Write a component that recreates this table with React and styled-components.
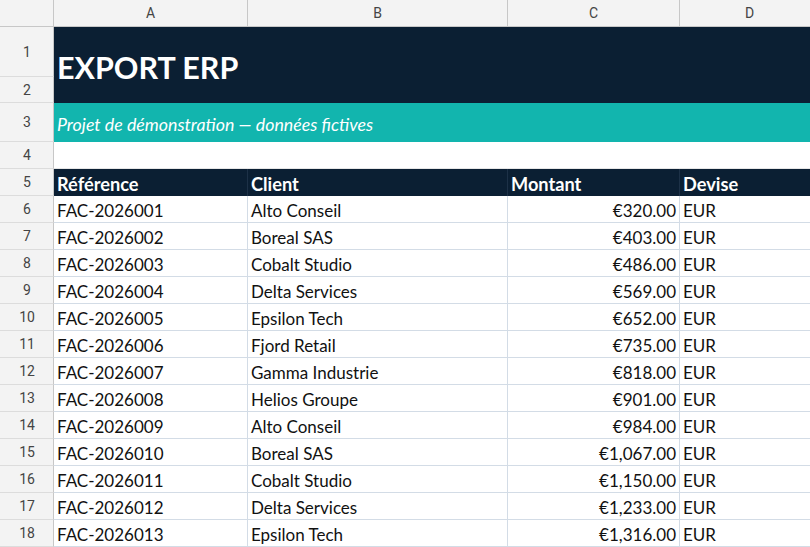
import React from "react";
import styled, { createGlobalStyle } from "styled-components";

const GlobalStyle = createGlobalStyle`
  html, body {
    margin: 0;
    padding: 0;
    background: #ffffff;
    overflow: hidden;
  }
  * { box-sizing: border-box; }
`;

const NAVY = "#0b1f33";
const TEAL = "#12b5ae";
const GRID = "#d3dce6";
const HEAD_LINE = "#c7c7c7";

const Sheet = styled.div`
  display: grid;
  grid-template-columns: 54px 194px 260px 172px 140px;
  grid-template-rows: 27px 50px 26px 39px 27px 27px repeat(13, 27px);
  width: 820px;
  font-family: Lato, "Noto Sans", sans-serif;
`;

const Corner = styled.div`
  background: #f3f3f3;
  border-right: 1px solid ${HEAD_LINE};
  border-bottom: 1px solid ${HEAD_LINE};
`;

const ColHead = styled.div`
  background: #f3f3f3;
  border-right: 1px solid ${HEAD_LINE};
  border-bottom: 1px solid ${HEAD_LINE};
  display: flex;
  align-items: center;
  justify-content: center;
  font-family: Roboto, "Liberation Sans", sans-serif;
  font-size: 14px;
  color: #444;
`;

const RowHead = styled(ColHead)`
  border-bottom: 1px solid #dcdcdc;
  padding-left: 1px;
`;

const Banner = styled.div`
  grid-column: 2 / 6;
  grid-row: ${p => p.$rows};
  background: ${p => p.$bg};
  color: #fff;
  display: flex;
  align-items: center;
  padding-left: 3px;
`;

const Title = styled.span`
  font-weight: 700;
  font-size: 30.5px;
  margin-top: 3px;
`;

const Subtitle = styled.span`
  font-style: italic;
  font-size: 17.8px;
  margin-top: 2px;
`;

const Empty = styled.div`
  grid-column: 2 / 6;
  background: #fff;
  border-bottom: 1px solid #e6e6e6;
`;

const HeadCell = styled.div`
  background: ${NAVY};
  color: #fff;
  font-weight: 700;
  font-size: 18.2px;
  display: flex;
  align-items: center;
  padding: 3px 3px 0;
  border-right: 1px solid #1d3147;
`;

const Cell = styled.div`
  background: #fff;
  color: #111;
  font-size: 17px;
  display: flex;
  align-items: center;
  justify-content: ${p => (p.$right ? "flex-end" : "flex-start")};
  padding: 2px 3px 0 3px;
  border-right: 1px solid ${GRID};
  border-bottom: 1px solid ${GRID};
  white-space: nowrap;
  overflow: hidden;
`;

const clients = [
  "Alto Conseil",
  "Boreal SAS",
  "Cobalt Studio",
  "Delta Services",
  "Epsilon Tech",
  "Fjord Retail",
  "Gamma Industrie",
  "Helios Groupe",
];

const formatAmount = n =>
  "€" + n.toLocaleString("en-US", { minimumFractionDigits: 2, maximumFractionDigits: 2 });

const invoices = Array.from({ length: 13 }, (_, i) => ({
  ref: `FAC-2026${String(i + 1).padStart(3, "0")}`,
  client: clients[i % clients.length],
  amount: formatAmount(320 + i * 83),
  currency: "EUR",
}));

export default function App() {
  return (
    <>
      <GlobalStyle />
      <Sheet>
        <Corner />
        {["A", "B", "C", "D"].map(l => (
          <ColHead key={l}>{l}</ColHead>
        ))}

        <RowHead style={{ gridRow: 2 }}>1</RowHead>
        <Banner $rows="2 / 4" $bg={NAVY}>
          <Title>EXPORT ERP</Title>
        </Banner>
        <RowHead style={{ gridRow: 3 }}>2</RowHead>

        <RowHead>3</RowHead>
        <Banner $rows="4" $bg={TEAL}>
          <Subtitle>Projet de démonstration — données fictives</Subtitle>
        </Banner>

        <RowHead>4</RowHead>
        <Empty />

        <RowHead>5</RowHead>
        <HeadCell>Référence</HeadCell>
        <HeadCell>Client</HeadCell>
        <HeadCell>Montant</HeadCell>
        <HeadCell>Devise</HeadCell>

        {invoices.map((inv, i) => (
          <React.Fragment key={inv.ref}>
            <RowHead>{i + 6}</RowHead>
            <Cell>{inv.ref}</Cell>
            <Cell>{inv.client}</Cell>
            <Cell $right>{inv.amount}</Cell>
            <Cell>{inv.currency}</Cell>
          </React.Fragment>
        ))}
      </Sheet>
    </>
  );
}
